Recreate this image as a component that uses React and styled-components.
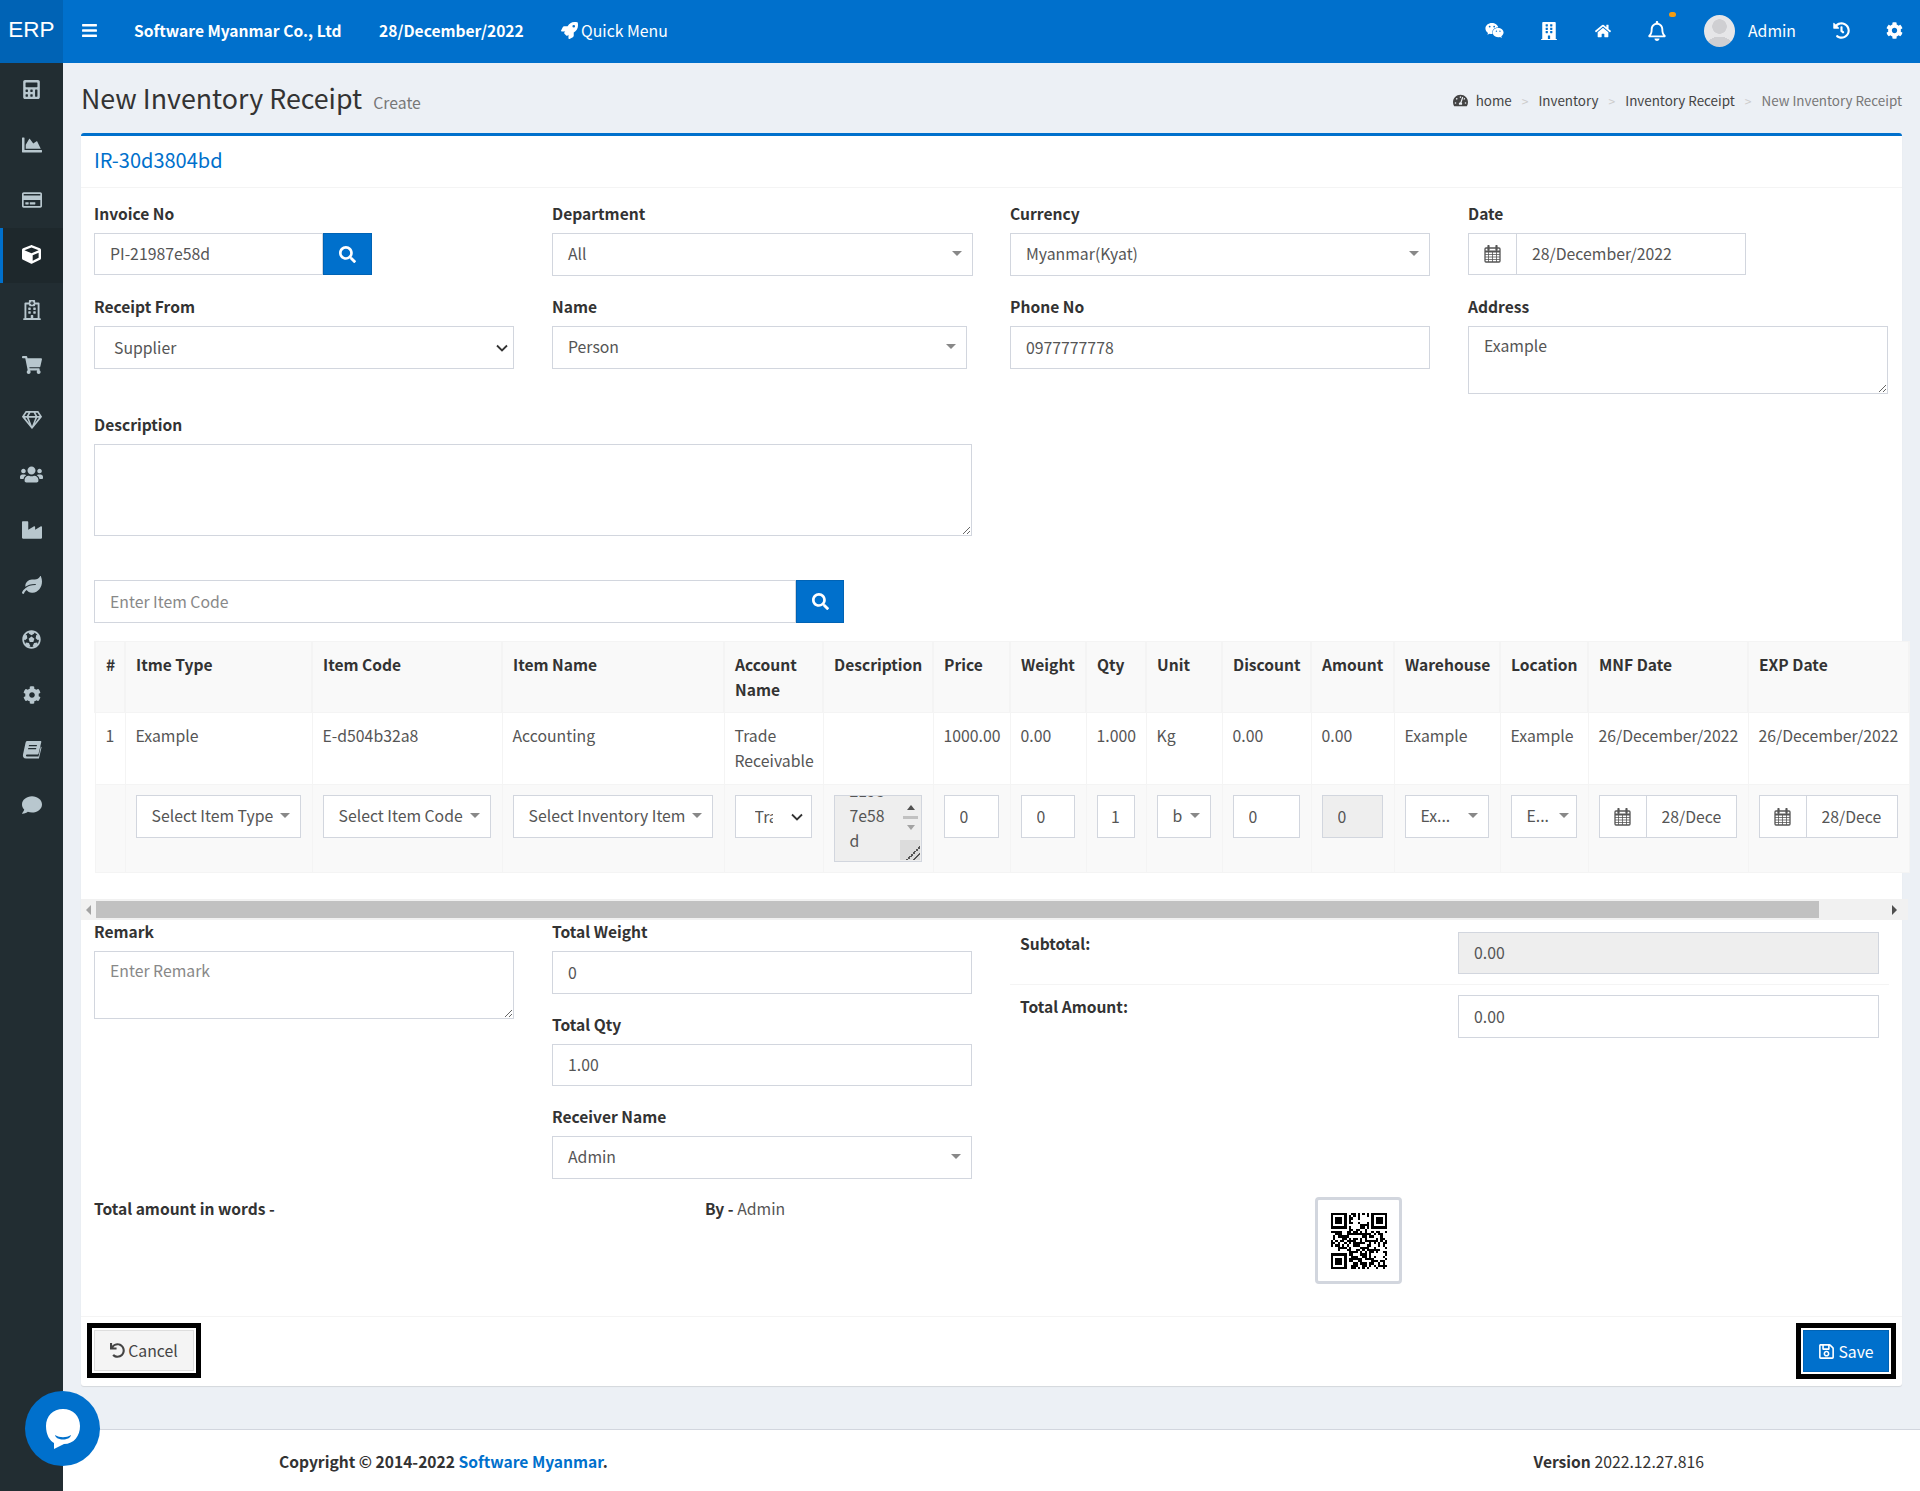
import React from 'react'
import styled, { createGlobalStyle } from 'styled-components'
import {
	FaBars, FaRocket, FaWeixin, FaBuilding, FaHome, FaRegBell, FaHistory, FaCog, FaTachometerAlt, FaSearch,
	FaUndo, FaRegSave, FaCalculator, FaChartArea, FaRegCreditCard, FaCube, FaRegHospital,
	FaShoppingCart, FaRegGem, FaUsers, FaIndustry, FaLeaf, FaFutbol, FaComment,
} from 'react-icons/fa'

const BLUE = '#0070cc'
const chevron = `url("data:image/svg+xml,%3Csvg xmlns='http://www.w3.org/2000/svg' width='12' height='8' viewBox='0 0 12 8'%3E%3Cpath d='M1 1.5l5 5 5-5' fill='none' stroke='%23333' stroke-width='1.8'/%3E%3C/svg%3E")`

function BookIcon() {
	return (
		<svg width="20" height="19" viewBox="0 0 20 19">
			<path d="M5 1h13.5c.6 0 .9.5.8 1L16.6 13.5c-.2.8-.8 1-1.4 1H5c-1.4 0-1.4 2 0 2h11.5l2.3-10 .8.8-2.7 11.2H4C1.5 18.500 .5 16.500 1 14.500L3.500 3C3.800 1.800 4.200 1 5 1z" fill="currentColor" />
			<path d="M7 5h8l-.3 1.300h-8zM6.300 8h8l-.3 1.300H6z" fill="#222d32" />
		</svg>
	)
}

function CalendarIcon() {
	return (
		<svg width="17" height="18" viewBox="0 0 17 18" fill="none" stroke="#555">
			<rect x="1" y="3" width="15" height="14" rx="1" strokeWidth="1.300" />
			<path d="M1 6.500h15" strokeWidth="2" />
			<path d="M1 9.500h15M1 12h15M1 14.500h15M4.500 6.500V17M8.500 6.500V17M12.500 6.500V17" strokeWidth=".8" />
			<path d="M4.500 1v4M12.500 1v4" strokeWidth="2.200" strokeLinecap="round" />
		</svg>
	)
}

const sideIcons = [
	<FaCalculator size={19} />, <FaChartArea size={20} />, <FaRegCreditCard size={20} />, <FaCube size={19} />,
	<FaRegHospital size={20} />, <FaShoppingCart size={20} />, <FaRegGem size={20} />, <FaUsers size={23} />,
	<FaIndustry size={20} />, <FaLeaf size={20} />, <FaFutbol size={19} />, <FaCog size={18} />, <BookIcon />, <FaComment size={20} />,
]
const colWidths = [30, 187, 190, 222, 99, 110, 77, 76, 60, 76, 89, 83, 106, 88, 160, 161]
const heads = ['#', 'Itme Type', 'Item Code', 'Item Name', 'Account Name', 'Description', 'Price', 'Weight', 'Qty', 'Unit', 'Discount', 'Amount', 'Warehouse', 'Location', 'MNF Date', 'EXP Date']
const cells = ['1', 'Example', 'E-d504b32a8', 'Accounting', 'Trade Receivable', '', '1000.00', '0.00', '1.000', 'Kg', '0.00', '0.00', 'Example', 'Example', '26/December/2022', '26/December/2022']

export default function App() {
	return (
		<Page>
			<Global />
			<TopBar>
				<Logo>ERP</Logo>
				<Burger><FaBars size={17} /></Burger>
				<Company>Software Myanmar Co., Ltd</Company>
				<TodayDate>28/December/2022</TodayDate>
				<QuickMenu><FaRocket size={17} />Quick Menu</QuickMenu>
				<TopRight>
					<FaWeixin size={19} />
					<FaBuilding size={18} />
					<FaHome size={16} />
					<BellWrap><FaRegBell size={20} /><Dot /></BellWrap>
					<UserBox><Avatar /><span>Admin</span></UserBox>
					<FaHistory size={17} />
					<FaCog size={17} />
				</TopRight>
			</TopBar>
			<Sidebar>
				{sideIcons.map((icon, i) => <SideItem key={i} $active={i === 3}>{icon}</SideItem>)}
			</Sidebar>
			<Main>
				<ContentHead>
					<PageTitle>New Inventory Receipt<small>Create</small></PageTitle>
					<Crumbs>
						<FaTachometerAlt size={15} />
						<CrumbLink>home</CrumbLink><Sep>&gt;</Sep>
						<CrumbLink>Inventory</CrumbLink><Sep>&gt;</Sep>
						<CrumbLink>Inventory Receipt</CrumbLink><Sep>&gt;</Sep>
						<CrumbNow>New Inventory Receipt</CrumbNow>
					</Crumbs>
				</ContentHead>
				<Card>
					<CardHead>IR-30d3804bd</CardHead>
					<CardBody>
						<FormGrid>
							<Field label="Invoice No">
								<InputGroup>
									<Input defaultValue="PI-21987e58d" $w="229px" />
									<SearchBtn $w="49px"><FaSearch size={17} /></SearchBtn>
								</InputGroup>
							</Field>
							<Field label="Department"><FakeSelect $wide>All</FakeSelect></Field>
							<Field label="Currency"><FakeSelect>Myanmar(Kyat)</FakeSelect></Field>
							<Field label="Date">
								<InputGroup $w="278px">
									<Addon $w="48px"><CalendarIcon /></Addon>
									<Input defaultValue="28/December/2022" $pad="15px" />
								</InputGroup>
							</Field>
							<Field label="Receipt From">
								<NativeSelect $h="43px"><option>Supplier</option></NativeSelect>
							</Field>
							<Field label="Name"><FakeSelect $h="43px" $narrow>Person</FakeSelect></Field>
							<Field label="Phone No"><Input defaultValue="0977777778" $h="43px" /></Field>
							<Field label="Address"><TextArea defaultValue="Example" $h="68px" /></Field>
							<WideField label="Description"><TextArea $h="92px" /></WideField>
						</FormGrid>

						<ItemSearch>
							<Input placeholder="Enter Item Code" $h="43px" $w="702px" />
							<SearchBtn $w="48px" $h="43px"><FaSearch size={17} /></SearchBtn>
						</ItemSearch>

						<ItemTable>
							<colgroup>{colWidths.map((w, i) => <Col key={i} $w={w} />)}</colgroup>
							<thead><tr>{heads.map(h => <Th key={h}>{h}</Th>)}</tr></thead>
							<tbody>
								<tr>{cells.map((c, i) => <Td key={i}>{c}</Td>)}</tr>
								<InputRow>
									<Td />
									<Td><FakeSelect $tight>Select Item Type</FakeSelect></Td>
									<Td><FakeSelect $tight>Select Item Code</FakeSelect></Td>
									<Td><FakeSelect $tight>Select Inventory Item</FakeSelect></Td>
									<Td><NativeSelect $h="43px" $clip><option>Trade Receivable</option></NativeSelect></Td>
									<Td>
										<MiniArea>
											<MiniText><span>2198</span><span>7e58</span><span>d</span></MiniText>
											<MiniScroll><ArrowUp /><MiniThumb /><ArrowDown /><MiniGrip /></MiniScroll>
										</MiniArea>
									</Td>
									<Td><Input defaultValue="0" $h="43px" $pad="15px" /></Td>
									<Td><Input defaultValue="0" $h="43px" $pad="15px" /></Td>
									<Td><Input defaultValue="1" $h="43px" $center /></Td>
									<Td><FakeSelect $tight>b</FakeSelect></Td>
									<Td><Input defaultValue="0" $h="43px" $pad="15px" /></Td>
									<Td><Input defaultValue="0" disabled $h="43px" $pad="15px" /></Td>
									<Td><FakeSelect $tight>Ex...</FakeSelect></Td>
									<Td><FakeSelect $tight $caretRight="7px">E...</FakeSelect></Td>
									<Td><TableDate /></Td>
									<Td><TableDate /></Td>
								</InputRow>
							</tbody>
						</ItemTable>

						<ScrollTrack>
							<ScrollArrow $dir="left" />
							<ScrollThumb />
							<ScrollArrow $dir="right" />
						</ScrollTrack>

						<FormGrid>
							<Field label="Remark"><TextArea placeholder="Enter Remark" $h="68px" /></Field>
							<Stack>
								<Field label="Total Weight"><Input defaultValue="0" $h="43px" /></Field>
								<Field label="Total Qty"><Input defaultValue="1.00" /></Field>
								<Field label="Receiver Name"><FakeSelect $h="43px">Admin</FakeSelect></Field>
							</Stack>
							<Summary>
								<SumRow $line>
									<b>Subtotal:</b>
									<Input defaultValue="0.00" disabled />
								</SumRow>
								<SumRow>
									<b>Total Amount:</b>
									<Input defaultValue="0.00" $h="43px" />
								</SumRow>
							</Summary>
						</FormGrid>

						<WordsRow>
							<b>Total amount in words -</b>
							<span><b>By - </b><Muted>Admin</Muted></span>
							<QrBox><QrCode /></QrBox>
						</WordsRow>
					</CardBody>
					<CardFoot>
						<CancelBtn><FaUndo size={15} />Cancel</CancelBtn>
						<SaveBtn><FaRegSave size={17} />Save</SaveBtn>
					</CardFoot>
				</Card>
			</Main>
			<Footer>
				<span><b>Copyright © 2014-2022 <BlueText>Software Myanmar</BlueText>.</b></span>
				<span><b>Version</b> 2022.12.27.816</span>
			</Footer>
			<ChatBubble>
				<svg width="38" height="44" viewBox="0 0 38 44">
					<path d="M19 2C9 2 2 9 2 19c0 9 4 15 8 17l0 6 10-5c10 0 16-8 16-18C36 9 29 2 19 2z" fill="#fff" />
					<path d="M11 28c5 3 11 3 16 0-1 6-15 6-16 0z" fill={BLUE} />
				</svg>
			</ChatBubble>
		</Page>
	)
}

function Field({ label, children, className }) {
	return (
		<div className={className}>
			<Label>{label}</Label>
			{children}
		</div>
	)
}

function FakeSelect({ children, ...rest }) {
	return (
		<SelectBox {...rest}>
			<SelectText>{children}</SelectText>
			<Caret />
		</SelectBox>
	)
}

function TableDate() {
	return (
		<InputGroup>
			<Addon $w="47px"><CalendarIcon /></Addon>
			<Input defaultValue="28/December/2022" $h="43px" $pad="15px" />
		</InputGroup>
	)
}

function QrCode() {
	const n = 25
	const finder = (x, y) => x >= 0 && y >= 0 && x < 7 && y < 7 && (x === 0 || y === 0 || x === 6 || y === 6 || (x > 1 && x < 5 && y > 1 && y < 5))
	const inFinder = (x, y) => (x < 8 && y < 8) || (x >= n - 8 && y < 8) || (x < 8 && y >= n - 8)
	let seed = 12345
	let d = ''
	for (let y = 0; y < n; y++) {
		for (let x = 0; x < n; x++) {
			seed = (seed * 1103515245 + 12345) & 0x7fffffff
			let on = (seed >> 16) % 100 < 52
			if (inFinder(x, y)) {
				on = finder(x, y) || finder(x - (n - 7), y) || finder(x, y - (n - 7))
			}
			if (on) d += `M${x} ${y}h1v1h-1z`
		}
	}
	return (
		<svg width="56" height="56" viewBox="0 0 25 25" shapeRendering="crispEdges">
			<path d={d} fill="#000" />
		</svg>
	)
}

const Global = createGlobalStyle`
	html, body { margin: 0; padding: 0; background: #ecf0f5; }
	* { box-sizing: border-box; }
	body {
		font-family: "Noto Sans CJK JP", "Noto Sans", sans-serif;
		font-size: 15.8px;
		line-height: 25px;
		color: #333;
	}
	b { font-size: 15.6px; }
`

//-----Shell-----
const Page = styled.div`
	position: relative;
	display: grid;
	grid-template-columns: 63px minmax(0, 1fr);
	grid-template-rows: 63px auto 63px;
	width: 1920px;
	min-height: 1491px;
`
const TopBar = styled.header`
	grid-column: 1 / 3;
	display: flex;
	align-items: center;
	height: 63px;
	padding-bottom: 2px;
	background: ${BLUE};
	color: #fff;
`
const Logo = styled.div`
	align-self: flex-start;
	width: 63px;
	height: 63px;
	line-height: 60px;
	text-align: center;
	background: #0063b5;
	font-family: "Liberation Sans", Arial, sans-serif;
	font-size: 22.5px;
`
const Burger = styled.div`
	display: flex;
	margin-left: 18px;
	width: 53px;
`
const Company = styled.b`
	width: 245px;
`
const TodayDate = styled.b`
	width: 182px;
`
const QuickMenu = styled.div`
	display: flex;
	align-items: center;
	gap: 3px;
`
const TopRight = styled.div`
	margin-left: auto;
	padding-right: 17px;
	display: flex;
	align-items: center;
	gap: 36.5px;
`
const BellWrap = styled.div`
	position: relative;
	display: flex;
`
const Dot = styled.i`
	position: absolute;
	top: -9px;
	right: -9px;
	width: 7px;
	height: 5px;
	border-radius: 3px;
	background: #f39c12;
`
const UserBox = styled.div`
	display: flex;
	align-items: center;
	gap: 13px;
`
const Avatar = styled.div`
	width: 31px;
	height: 32px;
	border-radius: 50%;
	background:
		radial-gradient(circle at 50% 36%, #cfcfd2 0 7px, transparent 7.5px),
		radial-gradient(ellipse 13px 9px at 50% 96%, #cfcfd2 0 100%, transparent 100%),
		#e6e6e8;
`
const Sidebar = styled.nav`
	grid-row: 2 / 4;
	background: #222d32;
	color: #b8c7ce;
`
const SideItem = styled.div`
	height: 55px;
	display: flex;
	align-items: center;
	justify-content: center;
	padding-bottom: 2px;
	background: ${p => p.$active ? '#1e282c' : 'transparent'};
	border-left: 3px solid ${p => p.$active ? BLUE : 'transparent'};
	padding-right: 3px;
	color: ${p => p.$active ? '#fff' : '#b8c7ce'};
`
const Main = styled.main`
	padding: 0 18px 43px;
`

//-----Header of content-----
const ContentHead = styled.div`
	height: 70px;
	padding-top: 4px;
	display: flex;
	align-items: center;
	justify-content: space-between;
`
const PageTitle = styled.h1`
	margin: 0;
	font-size: 26.8px;
	font-weight: 400;
	line-height: 40px;
	small {
		margin-left: 11px;
		font-size: 15.8px;
		color: #777;
	}
`
const Crumbs = styled.div`
	display: flex;
	align-items: center;
	font-size: 13.4px;
	color: #444;
	padding-top: 1px;
`
const CrumbLink = styled.span`
	margin-left: 8px;
`
const Sep = styled.span`
	margin: 0 2px 0 10px;
	color: #ccc;
	font-size: 12px;
`
const CrumbNow = styled(CrumbLink)`
	color: #777;
`
const Card = styled.section`
	background: #fff;
	border-top: 3px solid ${BLUE};
	border-radius: 3px;
	box-shadow: 0 1px 1px rgba(0, 0, 0, .1);
`
const CardHead = styled.div`
	height: 52px;
	line-height: 48px;
	padding-left: 13px;
	font-size: 20px;
	color: ${BLUE};
	border-bottom: 1px solid #f4f4f4;
`
const CardBody = styled.div`
	padding: 15px 12px 0 13px;
`
const FormGrid = styled.div`
	display: grid;
	grid-template-columns: repeat(4, 420px);
	column-gap: 38px;
	row-gap: 20px;
`
const WideField = styled(Field)`
	grid-column: 1 / 3;
`
const Label = styled.label`
	display: block;
	height: 22px;
	line-height: 20px;
	margin-bottom: 8px;
	font-weight: 700;
	font-size: 15.6px;
`

//-----Controls-----
const Input = styled.input`
	display: block;
	flex: ${p => p.$w ? 'none' : '1'};
	min-width: 0;
	width: ${p => p.$w || '100%'};
	height: ${p => p.$h || '42px'};
	padding: 0 ${p => p.$center ? '0' : (p.$pad || '15px')} 1px;
	text-align: ${p => p.$center ? 'center' : 'left'};
	border: 1px solid #d2d6de;
	background: #fff;
	font: inherit;
	color: #555;
	outline: none;
	&::placeholder { color: #888; opacity: 1; }
	&:disabled { background: #eee; }
`
const TextArea = styled.textarea`
	display: block;
	width: 100%;
	height: ${p => p.$h};
	padding: 6px 15px;
	border: 1px solid #d2d6de;
	font: inherit;
	color: #555;
	outline: none;
	&::placeholder { color: #888; opacity: 1; }
`
const NativeSelect = styled.select`
	display: block;
	width: 100%;
	height: ${p => p.$h};
	padding: 0 ${p => p.$clip ? '38px' : '30px'} 1px 19px;
	appearance: none;
	border: 1px solid #d2d6de;
	background: #fff ${chevron} no-repeat right ${p => p.$clip ? '8px' : '5px'} center;
	font: inherit;
	color: #555;
	outline: none;
`
const SelectBox = styled.div`
	display: flex;
	align-items: center;
	height: ${p => p.$h || '43px'};
	width: ${p => p.$narrow ? '415px' : p.$wide ? '421px' : '100%'};
	padding: 0 ${p => p.$caretRight || '10px'} 2px ${p => p.$tight ? '15px' : '15px'};
	border: 1px solid #d2d6de;
	background: #fff;
	color: #555;
`
const SelectText = styled.span`
	flex: 1;
	min-width: 0;
	white-space: nowrap;
`
const Caret = styled.i`
	margin-left: 4px;
	flex: none;
	width: 0;
	height: 0;
	border-left: 5px solid transparent;
	border-right: 5px solid transparent;
	border-top: 5px solid #888;
`
const InputGroup = styled.div`
	display: flex;
	width: ${p => p.$w || '100%'};
`
const Addon = styled.div`
	flex: none;
	width: ${p => p.$w};
	display: flex;
	align-items: center;
	justify-content: center;
	border: 1px solid #d2d6de;
	border-right: 0;
	background: #fff;
	color: #555;
`
const SearchBtn = styled.button`
	flex: none;
	width: ${p => p.$w};
	height: ${p => p.$h || '42px'};
	display: flex;
	align-items: center;
	justify-content: center;
	padding: 0;
	border: 1px solid #0063b5;
	background: ${BLUE};
	color: #fff;
`
const ItemSearch = styled.div`
	display: flex;
	margin: 44px 0 18px;
`

//-----Table-----
const ItemTable = styled.table`
	table-layout: fixed;
	width: 1814px;
	border-collapse: collapse;
	background: #fff;
`
const Col = styled.col`
	width: ${p => p.$w}px;
`
const Th = styled.th`
	height: 71px;
	padding: 10px 11px 10px 10px;
	text-align: left;
	vertical-align: top;
	font-weight: 700;
	font-size: 15.6px;
	background: #f9f9f9;
	border: 2px solid #f4f4f4;
	border-width: 1px 2px;
`
const Td = styled.td`
	height: 72px;
	padding: 10px 11px 9px 10px;
	vertical-align: top;
	color: #555;
	border: 1px solid #f4f4f4;
`
const InputRow = styled.tr`
	background: #f9f9f9;
	td { height: 88px; padding-top: 10px; padding-bottom: 10px; }
`
const MiniArea = styled.div`
	display: flex;
	width: 100%;
	height: 67px;
	border: 1px solid #d2d6de;
	background: #eee;
	overflow: hidden;
`
const MiniText = styled.div`
	flex: 1;
	display: flex;
	flex-direction: column;
	justify-content: flex-end;
	padding: 0 0 8px 15px;
	color: #555;
	span { flex: none; display: block; }
`
const MiniScroll = styled.div`
	position: relative;
	flex: none;
	width: 20px;
	display: flex;
	flex-direction: column;
	align-items: center;
	padding-top: 9px;
`
const ArrowUp = styled.i`
	width: 0;
	height: 0;
	border-left: 4px solid transparent;
	border-right: 4px solid transparent;
	border-bottom: 5px solid #505050;
`
const ArrowDown = styled.i`
	width: 0;
	height: 0;
	border-left: 4px solid transparent;
	border-right: 4px solid transparent;
	border-top: 5px solid #a3a3a3;
`
const MiniThumb = styled.i`
	width: 15px;
	height: 3px;
	margin: 6px 0;
	background: #c1c1c1;
`
const MiniGrip = styled.i`
	position: absolute;
	right: 1px;
	bottom: 1px;
	width: 20px;
	height: 20px;
	background:
		linear-gradient(135deg, transparent 65%, #555 65% 70%, transparent 70% 82%, #555 82% 87%, transparent 87%),
		#dcdcdc;
`
const ScrollTrack = styled.div`
	display: flex;
	align-items: center;
	height: 21px;
	width: 1827px;
	margin: 26px 0 1px -13px;
	background: #f1f1f1;
	position: relative;
`
const ScrollArrow = styled.i`
	flex: none;
	width: 15px;
	display: flex;
	justify-content: center;
	&::before {
		content: "";
		border-top: 5px solid transparent;
		border-bottom: 5px solid transparent;
		${p => p.$dir === 'left' ? 'border-right: 5px solid #a3a3a3;' : 'border-left: 5px solid #505050;'}
	}
	${p => p.$dir === 'right' && 'margin-left: 68px;'}
`
const ScrollThumb = styled.div`
	width: 1723px;
	height: 17px;
	background: #c1c1c1;
`

//-----Bottom of form-----
const Stack = styled.div`
	display: flex;
	flex-direction: column;
	gap: 20px;
`
const Summary = styled.div`
	grid-column: 3 / 5;
`
const SumRow = styled.div`
	display: grid;
	grid-template-columns: 438px 421px;
	padding: 0 10px 10px 10px;
	margin-top: ${p => p.$line ? '11px' : '0'};
	border-bottom: ${p => p.$line ? '1px solid #f4f4f4' : '0'};
	margin-bottom: ${p => p.$line ? '10px' : '0'};
	b { line-height: 22px; }
	${p => p.$line && 'margin-right: -1px;'}
`
const WordsRow = styled.div`
	display: grid;
	grid-template-columns: 611px 610px auto;
	align-items: start;
	margin-top: 18px;
	padding-bottom: 32px;
	line-height: 22px;
`
const Muted = styled.span`
	color: #555;
`
const QrBox = styled.div`
	width: 87px;
	height: 87px;
	display: flex;
	align-items: center;
	justify-content: center;
	border: 3px solid #d2d6de;
	border-radius: 4px;
`
const CardFoot = styled.div`
	display: flex;
	justify-content: space-between;
	padding: 13px 13px 14px;
	border-top: 1px solid #f4f4f4;
`
const CancelBtn = styled.button`
	display: flex;
	align-items: center;
	justify-content: center;
	gap: 3px;
	width: 100px;
	height: 41px;
	padding: 0;
	font: inherit;
	color: #444;
	background: #f4f4f4;
	border: 1px solid #ddd;
	outline: 5px solid #000;
	outline-offset: 2px;
`
const SaveBtn = styled(CancelBtn)`
	width: 86px;
	height: 42px;
	color: #fff;
	background: ${BLUE};
	border-color: #0063b5;
`

//-----Footer-----
const Footer = styled.footer`
	display: flex;
	align-items: center;
	padding: 0 216px 0 216px;
	justify-content: space-between;
	background: #fff;
	border-top: 1px solid #d2d6de;
`
const BlueText = styled.span`
	color: ${BLUE};
`
const ChatBubble = styled.div`
	position: absolute;
	left: 25px;
	top: 1391px;
	width: 75px;
	height: 75px;
	border-radius: 50%;
	background: ${BLUE};
	display: flex;
	align-items: center;
	justify-content: center;
`
